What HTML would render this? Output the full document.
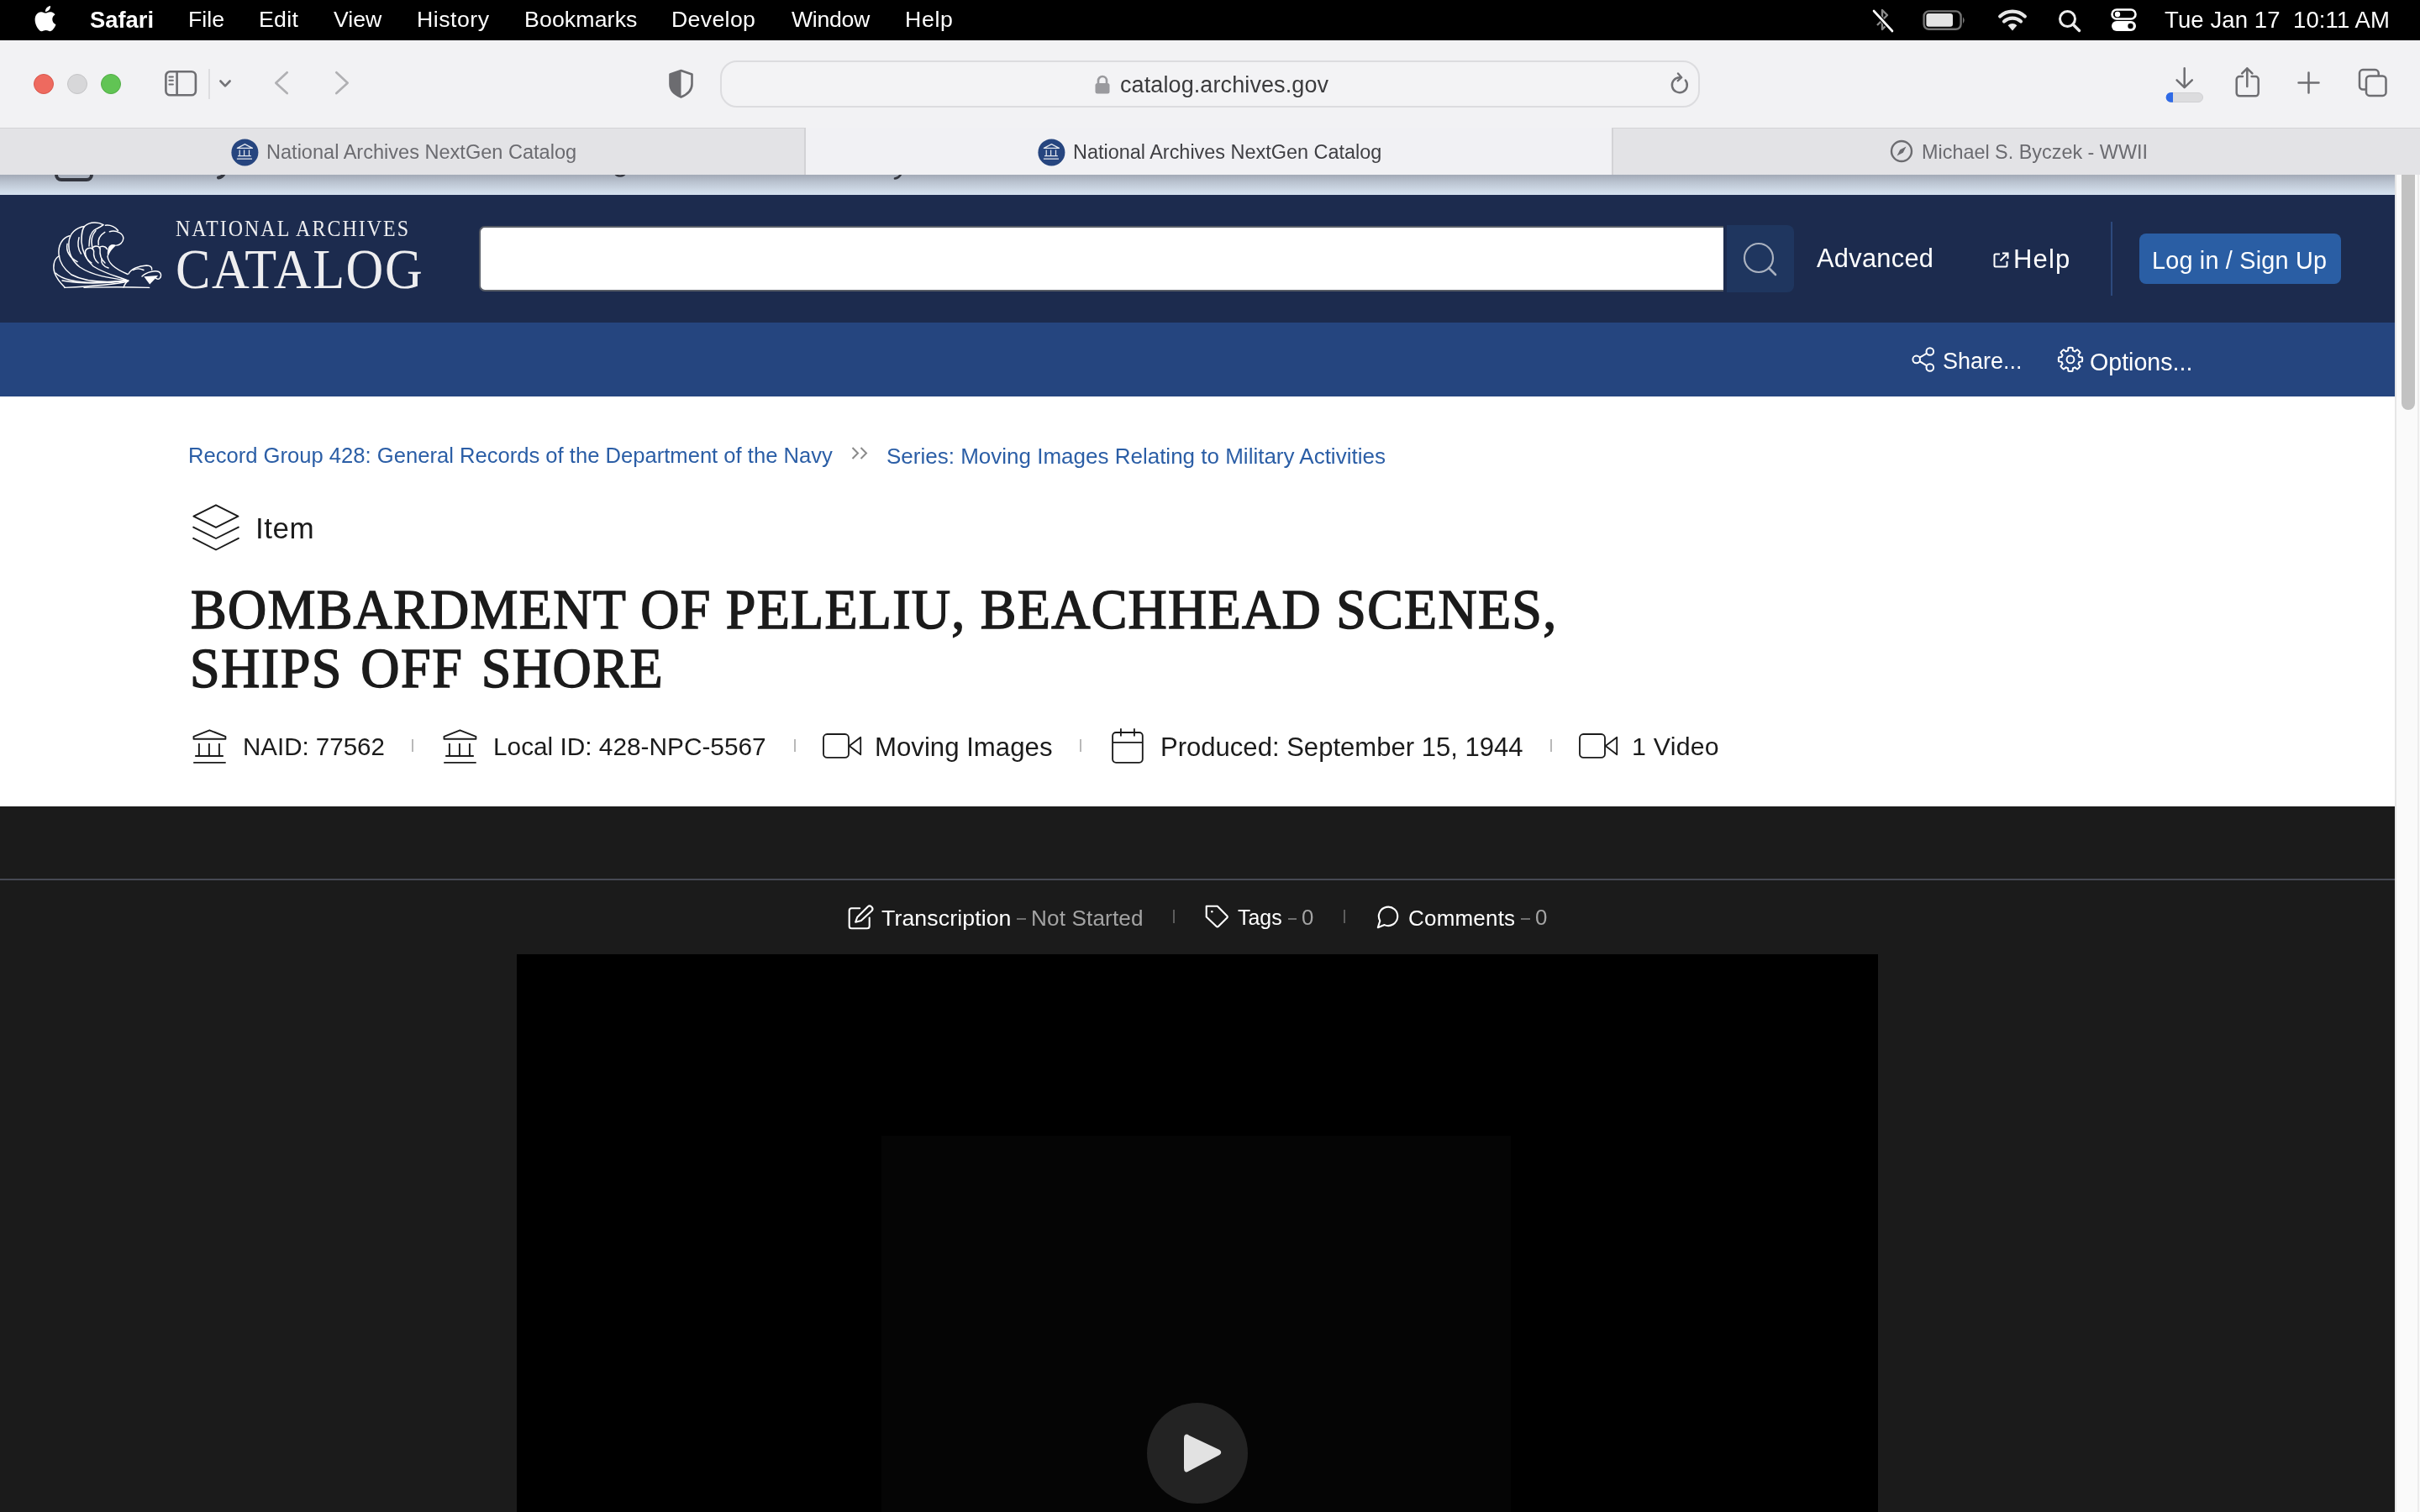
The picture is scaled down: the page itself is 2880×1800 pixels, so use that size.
<!DOCTYPE html>
<html><head><meta charset="utf-8">
<style>
html,body{margin:0;padding:0;width:2880px;height:1800px;overflow:hidden;background:#fff;font-family:"Liberation Sans",sans-serif}
.a{position:absolute}
.t{position:absolute;white-space:nowrap;line-height:1;will-change:transform}
.serif{font-family:"Liberation Serif",serif}
svg{position:absolute;overflow:visible}
</style></head><body>

<!-- ===== macOS menubar ===== -->
<div class="a" style="left:0;top:0;width:2880px;height:48px;background:#000"></div>
<svg style="left:40px;top:6px" width="27" height="32" viewBox="0 0 27 32">
  <path fill="#fff" d="M22.3 17.1c0-3.9 3.2-5.8 3.3-5.9-1.8-2.6-4.6-3-5.6-3-2.4-.2-4.6 1.4-5.8 1.4-1.2 0-3.1-1.4-5-1.4C6.6 8.3 4.2 9.8 2.9 12.1c-2.7 4.6-.7 11.5 1.9 15.3 1.3 1.8 2.8 3.9 4.8 3.8 1.9-.1 2.7-1.2 5-1.2s3 1.2 5 1.2c2.1 0 3.4-1.9 4.7-3.7 1.5-2.1 2.1-4.2 2.1-4.3-.1 0-4.1-1.6-4.1-6.1zM18.5 5.8c1-1.3 1.8-3 1.5-4.8-1.5.1-3.3 1-4.4 2.3-1 1.1-1.8 2.9-1.6 4.6 1.7.1 3.4-.9 4.5-2.1z"/>
</svg>
<div class="t" style="left:107px;top:10px;font-size:27.35px;font-weight:bold;color:#fff">Safari</div>
<div class="t" style="left:224px;top:10.2px;font-size:26.7px;color:#fff">File</div>
<div class="t" style="left:308px;top:10.2px;font-size:26.7px;letter-spacing:0.3px;color:#fff">Edit</div>
<div class="t" style="left:397px;top:10.2px;font-size:26.7px;color:#fff">View</div>
<div class="t" style="left:496px;top:10.2px;font-size:26.7px;letter-spacing:0.5px;color:#fff">History</div>
<div class="t" style="left:624px;top:10.2px;font-size:26.7px;letter-spacing:0.12px;color:#fff">Bookmarks</div>
<div class="t" style="left:799px;top:10.2px;font-size:26.7px;letter-spacing:0.33px;color:#fff">Develop</div>
<div class="t" style="left:942px;top:10.2px;font-size:26.7px;letter-spacing:-0.33px;color:#fff">Window</div>
<div class="t" style="left:1077px;top:10.2px;font-size:26.7px;letter-spacing:0.67px;color:#fff">Help</div>

<!-- status icons -->
<svg style="left:2226px;top:8px" width="30" height="32" viewBox="0 0 30 32">
  <path d="M8 9 L20 21 L14 27 L14 4 L20 10 L8 22" fill="none" stroke="#8a8a8a" stroke-width="2.4" stroke-linejoin="round"/>
  <path d="M3 4 L27 30" stroke="#000" stroke-width="5"/>
  <path d="M4 5 L26 29" stroke="#fff" stroke-width="2.6" stroke-linecap="round"/>
</svg>
<svg style="left:2288px;top:12px" width="52" height="25" viewBox="0 0 52 25">
  <rect x="1.6" y="1.4" width="44" height="21.4" rx="6" fill="none" stroke="#737373" stroke-width="2.4"/>
  <rect x="4.4" y="4" width="31.6" height="15.8" rx="3" fill="#e4e4e4"/>
  <path d="M48 8.2 Q51.5 12 48 15.9 Z" fill="#737373"/>
</svg>
<svg style="left:2377px;top:10px" width="36" height="28" viewBox="0 0 36 28">
  <path d="M18 26.5 L12.6 20.2 A8 8 0 0 1 23.4 20.2 Z" fill="#e6e6e6"/>
  <path d="M8 15.6 A14.5 14.5 0 0 1 28 15.6" fill="none" stroke="#e6e6e6" stroke-width="4.2" stroke-linecap="round"/>
  <path d="M3.2 9.6 A21.5 21.5 0 0 1 32.8 9.6" fill="none" stroke="#e6e6e6" stroke-width="4.2" stroke-linecap="round"/>
</svg>
<svg style="left:2449px;top:11px" width="30" height="28" viewBox="0 0 30 28">
  <circle cx="11.5" cy="11.5" r="9" fill="none" stroke="#ececec" stroke-width="3"/>
  <path d="M18 18 L25.5 25.5" stroke="#ececec" stroke-width="3.4" stroke-linecap="round"/>
</svg>
<svg style="left:2512px;top:10px" width="32" height="28" viewBox="0 0 32 28">
  <rect x="1.5" y="1.5" width="28" height="11" rx="5.5" fill="none" stroke="#fff" stroke-width="2.6"/>
  <circle cx="8" cy="7" r="3.2" fill="#fff"/>
  <rect x="1" y="15" width="29" height="12" rx="6" fill="#fff"/>
  <circle cx="23.5" cy="21" r="3.2" fill="#000"/>
</svg>
<div class="t" style="left:2576px;top:9.6px;font-size:27.5px;letter-spacing:0.1px;color:#fff">Tue Jan 17&nbsp;&nbsp;10:11 AM</div>

<!-- ===== Safari toolbar ===== -->
<div class="a" style="left:0;top:48px;width:2880px;height:104px;background:#f2f2f4"></div>
<div class="a" style="left:40px;top:88px;width:24px;height:24px;border-radius:50%;background:#ee6a5f;box-sizing:border-box;border:1px solid #d9574c"></div>
<div class="a" style="left:80px;top:88px;width:24px;height:24px;border-radius:50%;background:#d7d7d9;box-sizing:border-box;border:1px solid #c4c4c6"></div>
<div class="a" style="left:120px;top:88px;width:24px;height:24px;border-radius:50%;background:#61c454;box-sizing:border-box;border:1px solid #52ad46"></div>

<svg style="left:194px;top:83px" width="42" height="32" viewBox="0 0 42 32">
  <rect x="3.4" y="2.3" width="35.5" height="28" rx="5" fill="none" stroke="#6e6e72" stroke-width="2.6"/>
  <path d="M16.6 2.3 V30.3" stroke="#6e6e72" stroke-width="2.6"/>
  <path d="M7.4 8.5 H11.9 M7.4 12.8 H11.9 M7.4 17.4 H11.9" stroke="#6e6e72" stroke-width="2" stroke-linecap="round"/>
</svg>
<div class="a" style="left:248px;top:82px;width:1.5px;height:36px;background:#dddde0"></div>
<svg style="left:260px;top:93px" width="18" height="12" viewBox="0 0 18 12">
  <path d="M2.4 3.5 L8 9.3 L13.6 3.5" fill="none" stroke="#737377" stroke-width="2.6" stroke-linecap="round" stroke-linejoin="round"/>
</svg>
<svg style="left:325px;top:83px" width="22" height="34" viewBox="0 0 22 34">
  <path d="M16.7 3.3 L3.3 15.7 L16.7 28.1" fill="none" stroke="#b0b0b3" stroke-width="2.7" stroke-linecap="round" stroke-linejoin="round"/>
</svg>
<svg style="left:396px;top:83px" width="22" height="34" viewBox="0 0 22 34">
  <path d="M4.3 3.3 L17.7 15.7 L4.3 28.1" fill="none" stroke="#b0b0b3" stroke-width="2.7" stroke-linecap="round" stroke-linejoin="round"/>
</svg>
<svg style="left:795px;top:82px" width="32" height="36" viewBox="0 0 32 36">
  <path d="M15.5 2 L28.5 6.5 V18 C28.5 25 23 30.5 15.5 33.5 C8 30.5 2.5 25 2.5 18 V6.5 Z" fill="none" stroke="#6c6c70" stroke-width="2.6" stroke-linejoin="round"/>
  <path d="M15.5 2 L2.5 6.5 V18 C2.5 25 8 30.5 15.5 33.5 Z" fill="#6c6c70"/>
</svg>
<!-- URL field -->
<div class="a" style="left:857px;top:72px;width:1166px;height:56px;box-sizing:border-box;border:2px solid #dcdcdf;border-radius:20px;background:#f3f3f5"></div>
<svg style="left:1302px;top:89px" width="20" height="24" viewBox="0 0 20 24">
  <path d="M5 10 V7 A5 5 0 0 1 15 7 V10" fill="none" stroke="#9a9a9e" stroke-width="2.6"/>
  <rect x="1.5" y="10" width="17" height="12.5" rx="2.5" fill="#9a9a9e"/>
</svg>
<div class="t" style="left:1332.5px;top:88.1px;font-size:27px;letter-spacing:0.1px;color:#3b3b3d">catalog.archives.gov</div>
<svg style="left:1986px;top:84px" width="26" height="30" viewBox="0 0 26 30">
  <path d="M19.8 11.5 A9 9 0 1 1 13 8.2" fill="none" stroke="#707074" stroke-width="2.4" stroke-linecap="round"/>
  <path d="M11 3.5 L15.2 8.2 L10.8 12.2" fill="none" stroke="#707074" stroke-width="2.4" stroke-linecap="round" stroke-linejoin="round"/>
</svg>
<!-- right toolbar icons -->



<svg style="left:2570px;top:75px" width="280" height="50" viewBox="0 0 280 50">
  <g fill="none" stroke="#6e6e72" stroke-width="2.5" stroke-linecap="round" stroke-linejoin="round">
  <path d="M29.7 6.2 V28.6 M20.6 20.3 L29.7 29.1 L38.8 20.3"/>
  <path d="M99 16.1 H95.2 A3.5 3.5 0 0 0 91.7 19.6 V35.8 A3.5 3.5 0 0 0 95.2 39.3 H114.2 A3.5 3.5 0 0 0 117.7 35.8 V19.6 A3.5 3.5 0 0 0 114.2 16.1 H109.6"/>
  <path d="M104.3 27.9 V6.3 M98.2 12.4 L104.3 6.3 L110.4 12.4"/>
  <path d="M177.5 11.5 V35.5 M165.5 23.5 H189.5"/>
  <path d="M245.5 31.5 H242 A4 4 0 0 1 238 27.5 V12.1 A4 4 0 0 1 242 8.1 H256.7 A4 4 0 0 1 260.7 12.1 V15"/>
  <rect x="246" y="15.5" width="23.5" height="23.4" rx="4"/>
  </g>
  <rect x="8.5" y="35.5" width="43" height="11" rx="5.5" fill="#dcdcde" stroke="#d0d0d3" stroke-width="1"/>
  <path d="M16 35 H13.5 A5.9 5.9 0 0 0 13.5 46.8 H16 Z" fill="#2f6ae6"/>
</svg>

<!-- ===== Tab bar ===== -->
<div class="a" style="left:0;top:152px;width:2880px;height:56px;background:#f1f1f4"></div>
<div class="a" style="left:0;top:152px;width:959px;height:56px;background:#e3e3e6;border-top:1.5px solid #d3d3d6;box-sizing:border-box;border-right:2px solid #d3d3d6"></div>
<div class="a" style="left:1918px;top:152px;width:962px;height:56px;background:#e3e3e6;border-top:1.5px solid #d3d3d6;box-sizing:border-box;border-left:2px solid #d3d3d6"></div>

<!-- favicon tab 1 -->
<svg style="left:274.5px;top:164.6px" width="33" height="33" viewBox="0 0 33 33">
  <circle cx="16.4" cy="16.4" r="16" fill="#26457f"/>
  <path d="M7.4 11.4 L16.4 6.6 L25.4 11.4 Z" fill="none" stroke="#e3e7ee" stroke-width="1.3" stroke-linejoin="round"/>
  <path d="M10.2 13.5 V20.4 M15.6 13.5 V20.4 M21.5 13.5 V20.4 M8 20.6 H23.8 M6.9 24.2 H25" fill="none" stroke="#e3e7ee" stroke-width="1.25"/>
</svg>
<div class="t" style="left:317px;top:169.8px;font-size:23.55px;color:#6b6b70">National Archives NextGen Catalog</div>
<svg style="left:1234.5px;top:164.5px" width="33" height="33" viewBox="0 0 33 33">
  <circle cx="16.4" cy="16.4" r="16" fill="#26457f"/>
  <path d="M7.4 11.4 L16.4 6.6 L25.4 11.4 Z" fill="none" stroke="#e3e7ee" stroke-width="1.3" stroke-linejoin="round"/>
  <path d="M10.2 13.5 V20.4 M15.6 13.5 V20.4 M21.5 13.5 V20.4 M8 20.6 H23.8 M6.9 24.2 H25" fill="none" stroke="#e3e7ee" stroke-width="1.25"/>
</svg>
<div class="t" style="left:1276.5px;top:169.8px;font-size:23.45px;color:#3f3f43">National Archives NextGen Catalog</div>
<svg style="left:2249px;top:166px" width="28" height="28" viewBox="0 0 28 28">
  <circle cx="14" cy="14" r="12" fill="none" stroke="#6c6c70" stroke-width="2.4"/>
  <path d="M19.5 8.5 L15.8 15.8 L8.5 19.5 L12.2 12.2 Z" fill="#6c6c70"/>
</svg>
<div class="t" style="left:2287px;top:169.8px;font-size:23.4px;color:#6b6b70">Michael S. Byczek - WWII</div>

<!-- peek strip -->
<div class="a" style="left:0;top:208px;width:2850px;height:24px;overflow:hidden;background:linear-gradient(#a2a9b6,#b9c2cf 35%,#cdd8e5 75%,#d6e2ef)">
  <div class="a" style="left:65px;top:-20px;width:46px;height:28px;box-sizing:border-box;border:4.5px solid #33363f;border-radius:8px"></div>
  <svg style="left:256px;top:-3px" width="14" height="10" viewBox="0 0 14 10"><path d="M11.5 0 C10 4 8 6 4 6.5" fill="none" stroke="#33363f" stroke-width="4" stroke-linecap="round"/></svg>
  <svg style="left:729px;top:-6px" width="18" height="14" viewBox="0 0 18 14"><path d="M3 3 C3 9 15 9 15 3" fill="none" stroke="#33363f" stroke-width="2.6"/></svg>
  <svg style="left:1062px;top:-4px" width="14" height="12" viewBox="0 0 14 12"><path d="M11 1 C9.5 6 7 8 3 8.5" fill="none" stroke="#33363f" stroke-width="2.6" stroke-linecap="round"/></svg>
</div>

<!-- scrollbar -->
<div class="a" style="left:2850px;top:208px;width:30px;height:1592px;background:#fafafa;border-left:2px solid #e6e6e6;box-sizing:border-box"></div>
<div class="a" style="left:2877px;top:208px;width:1.5px;height:1592px;background:#ececec"></div>
<div class="a" style="left:2858px;top:208px;width:16px;height:280px;border-radius:0 0 8px 8px;background:#c2c2c2"></div>

<!-- ===== Page header ===== -->
<div class="a" style="left:0;top:232px;width:2850px;height:152px;background:#1c2b4e"></div>
<div class="a" style="left:0;top:384px;width:2850px;height:88px;background:#25457f"></div>

<!-- logo -->
<svg style="left:55px;top:255px" width="150" height="95" viewBox="0 0 150 95">
 <g fill="none" stroke="#fff" stroke-width="1.45" stroke-linecap="round" stroke-linejoin="round">
  <path d="M15.7 49.7 C9 53 7.5 62 10 70 C13 78 18 83 22 87"/>
  <path d="M11 70 C22 81 50 84 97 79"/>
  <path d="M27.7 25.8 C19 28 14 37 15 48 C16 58 22 66 30 72 C45 80 70 82 97 79"/>
  <path d="M45.3 14.5 C35 16 28 23 27 33 C26 45 31 56 40 63 C55 73 75 76 97 79"/>
  <path d="M67.9 12.6 C62 9 52 9 46 14 C42 18 42 26 42 33 C43 45 48 55 56 62 C70 71 85 74 97 79"/>
  <path d="M67.9 12.6 C64 16 60 17 57 19 C53 22 51 30 51 38"/>
  <path d="M70.4 13.2 C77 12.5 83 15.5 85.5 19.5"/>
  <path d="M75.4 20.7 C84 18.5 92 23 91.8 29 C91.5 34 87 37 83.6 37.1"/>
  <path d="M73 50 C74 58 80 64 97 71.5"/>
  <path d="M69.8 21.4 C64 25 61 30 62.2 36.5"/>
  <path d="M59 19.5 C54 25 53 32 54.7 39"/>
  <path d="M39 27.7 C37 35 38 42 41.5 47.1"/>
  <path d="M25.1 35.2 C23 44 28 52 37.1 56.6"/>
  <path d="M46.5 44 C47.5 41 51 39.5 54 40.5 C56 41.5 56.5 43 56.6 44"/>
  <path d="M54.5 41 C56 38.5 59 37.5 62 38.5 C63.5 39 64 40 64.1 41"/>
  <path d="M63 40 C64.5 38.5 67.5 38 70 39 C71 39.5 72 40.5 72.3 41.5"/>
  <path d="M46.5 44 C46 50 49 55 54 58"/>
  <path d="M56.6 44 C56 50 58 55 62 58"/>
  <path d="M64.1 41 C63.5 48 65 54 70 58"/>
  <path d="M66 53 C65 58 68 62 74 64"/>
  <path d="M19 79 C40 83 70 83 97 79"/>
  <path d="M22 87.4 C50 86 80 84 97 80"/>
  <path d="M45 87.3 C60 87 85 86 122.6 87.4"/>
  <path d="M92 87 C94 82 96 80 98 79"/>
  <path d="M98 71 C101 65 110 61.5 119.4 61 C124 61 126 63 125.7 66"/>
  <path d="M114 74 C120 68 130 67 134 68.5 C137 70 137.5 74 135 76.5 C133 78 131 77 130 75.5"/>
  <path d="M103 66.5 C107 64.5 112 64.5 116 66.5"/>
 </g>
 <path d="M83.6 37.1 C79 35 75 36 73.5 41 C72.5 45 72.5 49 73.5 51 C75 47 77 42 83.6 37.1 Z" fill="#fff"/>
 <path d="M116.3 74.2 L133.2 72.9 L123.2 83.6 Z" fill="#fff"/>
</svg>
<div class="t serif" style="left:209px;top:258.5px;font-size:24px;letter-spacing:2px;transform:scale(1,1.1);transform-origin:0 0;color:#eeeef0">NATIONAL ARCHIVES</div>
<div class="t serif" style="left:209px;top:286px;font-size:62px;letter-spacing:1.55px;transform:scale(1,1.1);transform-origin:0 0;color:#eeeef0">CATALOG</div>

<!-- search -->
<div class="a" style="left:570px;top:269px;width:1481px;height:78px;background:#fff;box-sizing:border-box;border:2px solid #575c66;border-right:none;border-radius:7px 0 0 7px"></div>
<div class="a" style="left:2055px;top:268px;width:80px;height:80px;background:#1f365f;border-radius:0 8px 8px 0"></div>
<svg style="left:2070px;top:283px" width="50" height="50" viewBox="0 0 50 50">
  <circle cx="23" cy="24" r="17" fill="none" stroke="#a9b1bf" stroke-width="2.2"/>
  <path d="M35 36 L43 44" stroke="#a9b1bf" stroke-width="2.6" stroke-linecap="round"/>
</svg>
<div class="t" style="left:2162px;top:293.3px;font-size:30.8px;letter-spacing:0.28px;color:#fff">Advanced</div>
<svg style="left:2371px;top:299px" width="22" height="22" viewBox="0 0 22 22">
  <path d="M9 3.5 H4 A1.5 1.5 0 0 0 2.5 5 V17 A1.5 1.5 0 0 0 4 18.5 H16 A1.5 1.5 0 0 0 17.5 17 V12" fill="none" stroke="#fff" stroke-width="2"/>
  <path d="M12 2.5 H18.5 V9 M18.5 2.5 L9.5 11.5" fill="none" stroke="#fff" stroke-width="2"/>
</svg>
<div class="t" style="left:2396px;top:292.8px;font-size:31px;letter-spacing:1.2px;color:#fff">Help</div>
<div class="a" style="left:2512px;top:264px;width:2px;height:88px;background:#2d4a7d"></div>
<div class="a" style="left:2546px;top:278px;width:240px;height:60px;background:#2a5ea4;border-radius:8px"></div>
<div class="t" style="left:2561px;top:295.6px;font-size:28.8px;letter-spacing:0.2px;color:#fff">Log in / Sign Up</div>

<!-- share / options -->
<svg style="left:2274px;top:412px" width="32" height="34" viewBox="0 0 32 34">
  <g fill="none" stroke="#fff" stroke-width="2">
  <circle cx="22.8" cy="6.5" r="4.3"/>
  <circle cx="6.7" cy="15.9" r="4.3"/>
  <circle cx="22.8" cy="25.5" r="4.3"/>
  <path d="M10.5 13.7 L19 8.7 M10.5 18.1 L19 23.3"/>
  </g>
</svg>
<div class="t" style="left:2312px;top:416.6px;font-size:27px;color:#fff">Share...</div>
<svg style="left:2446px;top:410px" width="36" height="36" viewBox="0 0 36 36">
  <path fill="none" stroke="#fff" stroke-width="2" stroke-linejoin="round" d="M15.02 7.52 L15.53 3.92 A14.2 14.2 0 0 1 20.47 3.92 L20.98 7.52 A10.8 10.8 0 0 1 23.24 8.45 L26.14 6.27 A14.2 14.2 0 0 1 29.63 9.76 L27.45 12.66 A10.8 10.8 0 0 1 28.38 14.92 L31.98 15.43 A14.2 14.2 0 0 1 31.98 20.37 L28.38 20.88 A10.8 10.8 0 0 1 27.45 23.14 L29.63 26.04 A14.2 14.2 0 0 1 26.14 29.53 L23.24 27.35 A10.8 10.8 0 0 1 20.98 28.28 L20.47 31.88 A14.2 14.2 0 0 1 15.53 31.88 L15.02 28.28 A10.8 10.8 0 0 1 12.76 27.35 L9.86 29.53 A14.2 14.2 0 0 1 6.37 26.04 L8.55 23.14 A10.8 10.8 0 0 1 7.62 20.88 L4.02 20.37 A14.2 14.2 0 0 1 4.02 15.43 L7.62 14.92 A10.8 10.8 0 0 1 8.55 12.66 L6.37 9.76 A14.2 14.2 0 0 1 9.86 6.27 L12.76 8.45 A10.8 10.8 0 0 1 15.02 7.52 Z"/>
  <circle cx="18" cy="17.9" r="4.4" fill="none" stroke="#fff" stroke-width="2"/>
</svg>
<div class="t" style="left:2487px;top:416.6px;font-size:28.6px;color:#fff">Options...</div>

<!-- ===== white content ===== -->
<div class="t" style="left:224px;top:530.2px;font-size:25.6px;color:#2b5ea6">Record Group 428: General Records of the Department of the Navy</div>
<svg style="left:1012px;top:531px" width="24" height="18" viewBox="0 0 24 18">
  <path d="M2.5 2 L9 8.5 L2.5 15 M12.5 2 L19 8.5 L12.5 15" fill="none" stroke="#8a8a8a" stroke-width="2"/>
</svg>
<div class="t" style="left:1055px;top:530.2px;font-size:26px;color:#2b5ea6">Series: Moving Images Relating to Military Activities</div>

<svg style="left:220px;top:595px" width="75" height="70" viewBox="0 0 75 70">
  <g fill="none" stroke="#1b1b1b" stroke-width="1.95" stroke-linejoin="round" stroke-linecap="round">
  <path d="M37 6.3 L63.4 19.7 L37 32.9 L10.4 19.7 Z"/>
  <path d="M10.2 32.6 L37 46 L63.8 32.6"/>
  <path d="M10.2 45.8 L37 59.5 L63.8 45.8"/>
  </g>
</svg>
<div class="t" style="left:303.5px;top:610.9px;font-size:35px;letter-spacing:0.5px;color:#1b1b1b">Item</div>

<div class="t serif" style="left:227px;top:691px;font-size:64px;font-weight:normal;-webkit-text-stroke:1.5px #1b1b1b;letter-spacing:1.28px;transform:scale(1,1.07);transform-origin:0 0;color:#1b1b1b">BOMBARDMENT OF PELELIU, BEACHHEAD SCENES,</div>
<div class="t serif" style="left:226px;top:760.6px;font-size:64px;font-weight:normal;-webkit-text-stroke:1.5px #1b1b1b;letter-spacing:1.5px;word-spacing:4px;transform:scale(1,1.07);transform-origin:0 0;color:#1b1b1b">SHIPS OFF SHORE</div>

<!-- metadata row -->
<svg style="left:220px;top:860px" width="60" height="55" viewBox="0 0 60 55">
  <g fill="none" stroke="#1b1b1b" stroke-width="1.9">
  <path d="M10.5 19.8 V16.9 L29.4 9.3 L48.4 16.9 V19.8 Z" stroke-linejoin="round"/>
  <path d="M16.9 25.1 V40 M28.9 25.1 V40 M40.9 25.1 V40"/>
  <path d="M12.2 40 H45.8"/>
  <path d="M10.2 47.9 H48.7"/>
  </g>
</svg>
<div class="t" style="left:289px;top:873.6px;font-size:29.5px;color:#1b1b1b">NAID: 77562</div>
<div class="a" style="left:490px;top:880px;width:2px;height:15px;background:#b9b9b9"></div>
<svg style="left:518px;top:860px" width="60" height="55" viewBox="0 0 60 55">
  <g fill="none" stroke="#1b1b1b" stroke-width="1.9">
  <path d="M10.5 19.8 V16.9 L29.4 9.3 L48.4 16.9 V19.8 Z" stroke-linejoin="round"/>
  <path d="M16.9 25.1 V40 M28.9 25.1 V40 M40.9 25.1 V40"/>
  <path d="M12.2 40 H45.8"/>
  <path d="M10.2 47.9 H48.7"/>
  </g>
</svg>
<div class="t" style="left:587px;top:873.6px;font-size:29.8px;color:#1b1b1b">Local ID: 428-NPC-5567</div>
<div class="a" style="left:945px;top:880px;width:2px;height:15px;background:#b9b9b9"></div>
<svg style="left:970px;top:860px" width="60" height="55" viewBox="0 0 60 55">
  <g fill="none" stroke="#1b1b1b" stroke-width="1.85" stroke-linejoin="round">
  <rect x="10" y="14" width="30" height="27.8" rx="4.4"/>
  <path d="M40.7 28 L54.2 17.8 V38.2 Z"/>
  </g>
</svg>
<div class="t" style="left:1041px;top:873.6px;font-size:31.2px;color:#1b1b1b">Moving Images</div>
<div class="a" style="left:1285px;top:880px;width:2px;height:15px;background:#b9b9b9"></div>
<svg style="left:1315px;top:860px" width="55" height="55" viewBox="0 0 55 55">
  <g fill="none" stroke="#1b1b1b" stroke-width="1.85">
  <rect x="9.1" y="12" width="35.7" height="35.8" rx="4"/>
  <path d="M9.1 23.8 H44.8 M18.9 7.3 V16.6 M34.9 7.3 V16.6"/>
  </g>
</svg>
<div class="t" style="left:1381px;top:873.6px;font-size:31.05px;color:#1b1b1b">Produced: September 15, 1944</div>
<div class="a" style="left:1845px;top:880px;width:2px;height:15px;background:#b9b9b9"></div>
<svg style="left:1870px;top:860px" width="60" height="55" viewBox="0 0 60 55">
  <g fill="none" stroke="#1b1b1b" stroke-width="1.85" stroke-linejoin="round">
  <rect x="10" y="14" width="30" height="27.8" rx="4.4"/>
  <path d="M40.7 28 L54.2 17.8 V38.2 Z"/>
  </g>
</svg>
<div class="t" style="left:1942px;top:873.6px;font-size:30.3px;letter-spacing:0.25px;color:#1b1b1b">1 Video</div>

<!-- ===== dark viewer section ===== -->
<div class="a" style="left:0;top:960px;width:2850px;height:840px;background:#1b1b1b"></div>
<div class="a" style="left:0;top:1046px;width:2850px;height:2px;background:#464953"></div>

<svg style="left:1000px;top:1070px" width="50" height="45" viewBox="0 0 50 45">
  <g fill="none" stroke="#fff" stroke-width="2.1" stroke-linecap="round" stroke-linejoin="round">
  <path d="M23.2 11.3 H13.5 A2.8 2.8 0 0 0 10.7 14.1 V32.5 A2.8 2.8 0 0 0 13.5 35.3 H31.9 A2.8 2.8 0 0 0 34.7 32.5 V22.6"/>
  <path d="M18.2 27.7 L20.2 22 L32.7 9.5 A3.4 3.4 0 0 1 37.5 14.3 L24.8 26 Z"/>
  </g>
</svg>
<div class="t" style="left:1048.5px;top:1080px;font-size:26.7px;letter-spacing:0.1px;color:#fff">Transcription</div>
<div class="a" style="left:1210px;top:1093px;width:11px;height:2px;background:#6f6f6f"></div>
<div class="t" style="left:1226.5px;top:1080px;font-size:26.1px;letter-spacing:0.15px;color:#a3a3a3">Not Started</div>
<div class="a" style="left:1396px;top:1083px;width:2px;height:16px;background:#5c5c5c"></div>
<svg style="left:1425px;top:1070px" width="50" height="45" viewBox="0 0 50 45">
  <path d="M10.7 8.8 H23.8 L35.4 20.4 A1.4 1.4 0 0 1 35.4 22.4 L24.8 33 A1.4 1.4 0 0 1 22.8 33 L10.7 21.6 Z" fill="none" stroke="#fff" stroke-width="2.1" stroke-linejoin="round"/>
  <circle cx="17.3" cy="15.3" r="1.3" fill="#fff"/>
</svg>
<div class="t" style="left:1473px;top:1080px;font-size:24.9px;color:#fff">Tags</div>
<div class="a" style="left:1533px;top:1093px;width:10px;height:2px;background:#6f6f6f"></div>
<div class="t" style="left:1549px;top:1080px;font-size:25.8px;color:#a3a3a3">0</div>
<div class="a" style="left:1599px;top:1083px;width:2px;height:16px;background:#5c5c5c"></div>
<svg style="left:1630px;top:1070px" width="45" height="45" viewBox="0 0 45 45">
  <path d="M12.3 26.3 A11.2 11.2 0 1 1 17.6 31.1 L9.8 34.2 Z" fill="none" stroke="#fff" stroke-width="2.1" stroke-linejoin="round"/>
</svg>
<div class="t" style="left:1675.5px;top:1080px;font-size:26px;letter-spacing:0.2px;color:#fff">Comments</div>
<div class="a" style="left:1810px;top:1093px;width:11px;height:2px;background:#6f6f6f"></div>
<div class="t" style="left:1827px;top:1080px;font-size:25.8px;color:#a3a3a3">0</div>

<!-- video -->
<div class="a" style="left:615px;top:1136px;width:1620px;height:664px;background:#000"></div>
<div class="a" style="left:1049px;top:1352px;width:749px;height:448px;background:#050505"></div>
<div class="a" style="left:1365px;top:1670px;width:120px;height:120px;border-radius:50%;background:#232323"></div>
<svg style="left:1405px;top:1702px" width="52" height="56" viewBox="0 0 52 56">
  <path d="M9 8.5 Q6 6 6 10 V46 Q6 50 9 47.5 L45 28.5 Q47.5 27 45 25.5 Z" fill="#e2e2e2" stroke="#e2e2e2" stroke-width="4" stroke-linejoin="round"/>
</svg>

</body></html>
